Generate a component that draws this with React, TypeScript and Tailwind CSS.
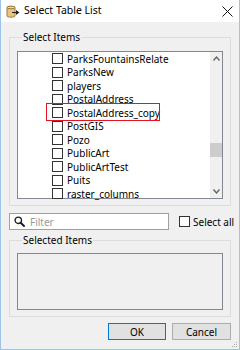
import React from "react";

const items = [
  "ParksFountainsRelate",
  "ParksNew",
  "players",
  "PostalAddress",
  "PostalAddress_copy",
  "PostGIS",
  "Pozo",
  "PublicArt",
  "PublicArtTest",
  "Puits",
  "raster_columns",
];

function Box() {
  return <span className="block w-[11px] h-[11px] border border-[#333333] bg-white shrink-0" />;
}

function TitleIcon() {
  return (
    <svg width="14" height="13" viewBox="0 0 14 13">
      <path d="M1 2.5 C1 1 9 1 9 2.5 L9 11 C9 12.5 1 12.5 1 11 Z" fill="#e8c583" stroke="#9a7a3c" strokeWidth="1" />
      <ellipse cx="5" cy="2.5" rx="4" ry="1.3" fill="#f3dca8" stroke="#9a7a3c" strokeWidth="1" />
      <path d="M6 7 H10 V5 L13.5 7.5 L10 10 V8 H6 Z" fill="#222222" />
    </svg>
  );
}

export default function App() {
  return (
    <div
      className="w-[240px] h-[350px] flex flex-col bg-[#f0f0f0] border-x border-b border-[#9ec3e6] text-[10px] text-black"
      style={{ fontFamily: '"Segoe UI", "Noto Sans", sans-serif' }}
    >
      <div className="h-[22px] shrink-0 bg-white flex items-center pl-[5px] pr-[6px]">
        <TitleIcon />
        <span className="ml-[4px] text-[10.5px]">Select Table List</span>
        <svg className="ml-auto" width="11" height="11" viewBox="0 0 11 11">
          <path d="M0.5 0.5 L10.5 10.5 M10.5 0.5 L0.5 10.5" stroke="#111" strokeWidth="1" />
        </svg>
      </div>

      <fieldset className="mx-[8px] mt-[9px] shrink-0 border border-[#dcdcdc] px-[7px] pt-[8px] pb-[6px]">
        <legend className="ml-[5px] px-[1px] leading-[12px]">Select Items</legend>
        <div className="relative flex h-[148px] border border-[#828790] bg-white">
          <div className="flex-1 flex flex-col">
            {items.map((name) => (
              <div key={name} className="h-[13.5px] shrink-0 flex items-center pl-[34px] gap-[4px]">
                <Box />
                <span className="leading-[10px]">{name}</span>
              </div>
            ))}
          </div>
          <div className="w-[12px] bg-[#f0f0f0] flex flex-col items-center">
            <svg className="mt-[4px]" width="7" height="5" viewBox="0 0 7 5">
              <path d="M0.5 4.5 L3.5 1 L6.5 4.5" fill="none" stroke="#606060" strokeWidth="1.3" />
            </svg>
            <div className="mt-[82px] w-full h-[14px] bg-[#cdcdcd]" />
            <svg className="mt-auto mb-[4px]" width="7" height="5" viewBox="0 0 7 5">
              <path d="M0.5 0.5 L3.5 4 L6.5 0.5" fill="none" stroke="#606060" strokeWidth="1.3" />
            </svg>
          </div>
          <div className="absolute left-[28px] top-[51px] w-[114px] h-[18px] border-[1.5px] border-[#e81123]" />
        </div>
      </fieldset>

      <div className="flex items-center mt-[7px] ml-[8px] h-[17px] shrink-0">
        <div className="w-[160px] h-[17px] border border-[#a0a0a0] bg-white flex items-center pl-[4px] gap-[5px]">
          <svg width="11" height="11" viewBox="0 0 11 11">
            <circle cx="4.3" cy="4.3" r="3.2" fill="none" stroke="#222" strokeWidth="1.4" />
            <path d="M6.7 6.7 L10 10" stroke="#222" strokeWidth="2" strokeLinecap="round" />
          </svg>
          <span className="text-[#9a9a9a] leading-[12px]">Filter</span>
        </div>
        <div className="ml-[10px] flex items-center gap-[3px]">
          <Box />
          <span className="leading-[12px]">Select all</span>
        </div>
      </div>

      <fieldset className="mx-[8px] mt-[4px] shrink-0 border border-[#dcdcdc] px-[7px] pt-[7px] pb-[6px]">
        <legend className="ml-[5px] px-[1px] leading-[12px]">Selected Items</legend>
        <div className="h-[57px] border border-[#828790] bg-[#f0f0f0]" />
      </fieldset>

      <div className="flex justify-end gap-[6px] mt-[6px] pr-[8px] shrink-0">
        <button className="w-[58px] h-[17px] border border-[#0078d7] bg-[#e1e1e1] leading-[12px] text-[10px]">
          OK
        </button>
        <button className="w-[59px] h-[17px] border border-[#adadad] bg-[#e1e1e1] leading-[12px] text-[10px]">
          Cancel
        </button>
      </div>
      <div className="flex-1 flex items-end justify-end pr-[1px] pb-[1px]">
        <svg width="7" height="7" viewBox="0 0 7 7">
          <rect x="5" y="1" width="1" height="1" fill="#b0b0b0" />
          <rect x="3" y="3" width="1" height="1" fill="#b0b0b0" />
          <rect x="5" y="3" width="1" height="1" fill="#b0b0b0" />
          <rect x="1" y="5" width="1" height="1" fill="#b0b0b0" />
          <rect x="3" y="5" width="1" height="1" fill="#b0b0b0" />
          <rect x="5" y="5" width="1" height="1" fill="#b0b0b0" />
        </svg>
      </div>
    </div>
  );
}
